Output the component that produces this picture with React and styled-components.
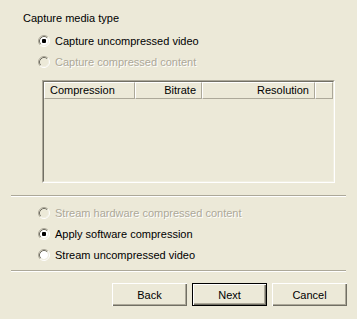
import React from "react";
import styled, { createGlobalStyle } from "styled-components";

const Global = createGlobalStyle`
  html, body { margin: 0; padding: 0; background: #ece9d8; }
  body { font-family: "Liberation Sans", Arial, sans-serif; font-size: 11px; }
`;

const Page = styled.div`
  width: 357px;
  height: 319px;
  background: #ece9d8;
  display: flex;
  flex-direction: column;
  box-sizing: border-box;
  padding-top: 12px;
  color: #000;
  line-height: 13px;
`;

const Title = styled.div`
  margin-left: 23px;
  height: 13px;
`;

const Options = styled.div`
  display: flex;
  flex-direction: column;
  gap: 8px;
  padding-left: 38px;
  margin-top: ${(p) => p.$top}px;
`;

const OptionRow = styled.label`
  display: flex;
  align-items: flex-start;
  gap: 5px;
  height: 13px;
  color: ${(p) => (p.$disabled ? "#aca899" : "#000")};
  text-shadow: ${(p) => (p.$disabled ? "1px 1px 0 #fff" : "none")};
`;

const RadioSvg = styled.svg`
  flex: none;
  width: 12px;
  height: 12px;
  display: block;
`;

function Radio({ checked, disabled }) {
  const tl = "M 2.11 9.89 A 5.5 5.5 0 0 1 9.89 2.11";
  const br = "M 9.89 2.11 A 5.5 5.5 0 0 1 2.11 9.89";
  const tl2 = "M 2.82 9.18 A 4.5 4.5 0 0 1 9.18 2.82";
  const br2 = "M 9.18 2.82 A 4.5 4.5 0 0 1 2.82 9.18";
  return (
    <RadioSvg viewBox="0 0 12 12">
      <circle cx="6" cy="6" r="4" fill={disabled ? "#ece9d8" : "#fff"} />
      <path d={tl} stroke="#aca899" strokeWidth="1" fill="none" />
      <path d={br} stroke="#fff" strokeWidth="1" fill="none" />
      <path d={tl2} stroke="#716f64" strokeWidth="1" fill="none" />
      <path d={br2} stroke="#f1efe2" strokeWidth="1" fill="none" />
      {checked && <rect x="4" y="4" width="4" height="4" rx="1" fill={disabled ? "#aca899" : "#000"} />}
    </RadioSvg>
  );
}

function Option({ label, checked, disabled }) {
  return (
    <OptionRow $disabled={disabled}>
      <Radio checked={checked} disabled={disabled} />
      <span>{label}</span>
    </OptionRow>
  );
}

const ListBox = styled.div`
  margin-top: 11px;
  margin-left: 42px;
  width: 293px;
  height: 103px;
  box-sizing: border-box;
  border-top: 1px solid #aca899;
  border-left: 1px solid #aca899;
  border-right: 1px solid #fff;
  border-bottom: 1px solid #fff;
  display: flex;
`;

const ListInner = styled.div`
  flex: 1;
  border-top: 1px solid #716f64;
  border-left: 1px solid #716f64;
  border-right: 1px solid #f1efe2;
  border-bottom: 1px solid #f1efe2;
  background: #ece9d8;
  display: flex;
  flex-direction: column;
`;

const Header = styled.div`
  display: flex;
  height: 17px;
`;

const HeaderCell = styled.div`
  box-sizing: border-box;
  width: ${(p) => p.$w}px;
  flex: ${(p) => (p.$fill ? "1" : "none")};
  height: 17px;
  border-top: 1px solid #fff;
  border-left: 1px solid #fff;
  border-right: 1px solid #aca899;
  border-bottom: 1px solid #aca899;
  padding: 1px 5px 0 5px;
  text-align: ${(p) => p.$align || "left"};
  white-space: nowrap;
`;

const Divider = styled.div`
  margin: ${(p) => p.$top}px 11px 0 11px;
  height: 1px;
  width: 335px;
  background: #aca899;
  border-bottom: 1px solid #fff;
`;

const ButtonRow = styled.div`
  display: flex;
  justify-content: flex-end;
  gap: 5px;
  margin-top: 11px;
  padding-right: 10px;
`;

const Button = styled.button`
  box-sizing: border-box;
  width: 75px;
  height: 23px;
  font-family: "Liberation Sans", Arial, sans-serif;
  font-size: 11px;
  color: #000;
  background: #ece9d8;
  padding: 0;
  border: none;
  box-shadow: ${(p) =>
    p.$default
      ? "inset 0 0 0 1px #000, inset 1px 1px 0 1px #fff, inset -1px -1px 0 1px #716f64, inset -2px -2px 0 1px #aca899"
      : "inset 1px 1px 0 0 #fff, inset -1px -1px 0 0 #716f64, inset -2px -2px 0 0 #aca899"};
`;

export default function App() {
  return (
    <Page>
      <Global />
      <Title>Capture media type</Title>
      <Options $top={10}>
        <Option label="Capture uncompressed video" checked />
        <Option label="Capture compressed content" disabled />
      </Options>
      <ListBox>
        <ListInner>
          <Header>
            <HeaderCell $w={91}>Compression</HeaderCell>
            <HeaderCell $w={67} $align="right">Bitrate</HeaderCell>
            <HeaderCell $w={113} $align="right">Resolution</HeaderCell>
            <HeaderCell $fill />
          </Header>
        </ListInner>
      </ListBox>
      <Divider $top={12} />
      <Options $top={10}>
        <Option label="Stream hardware compressed content" disabled />
        <Option label="Apply software compression" checked />
        <Option label="Stream uncompressed video" />
      </Options>
      <Divider $top={8} />
      <ButtonRow>
        <Button>Back</Button>
        <Button $default>Next</Button>
        <Button>Cancel</Button>
      </ButtonRow>
    </Page>
  );
}
